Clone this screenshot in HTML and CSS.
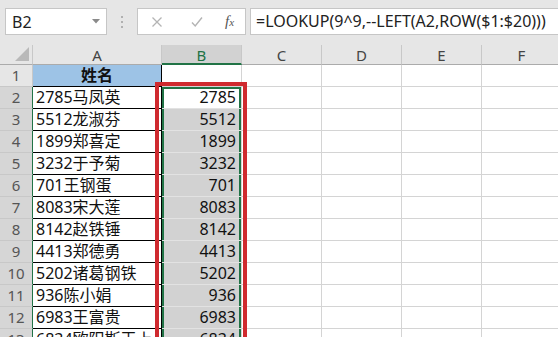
FILE: index.html
```html
<!DOCTYPE html>
<html lang="zh">
<head>
<meta charset="utf-8">
<link rel="stylesheet" href="styles.css">
</head>
<body>
<div class="app">
  <div class="fbar">
    <div class="namebox">
      <span class="nb-text">B2</span>
      <svg class="nb-arrow" width="8" height="5" viewBox="0 0 8 5"><path d="M0 0H8L4 4.5Z" fill="#8a8a8a"/></svg>
    </div>
    <div class="dots"><i></i><i></i><i></i></div>
    <div class="fxbox">
      <svg class="ico" width="12" height="12" viewBox="0 0 12 12"><path d="M1.5 1.5L10.5 10.5M10.5 1.5L1.5 10.5" stroke="#b4b4b4" stroke-width="1.3" fill="none"/></svg>
      <svg class="ico" width="12" height="12" viewBox="0 0 12 12"><path d="M1 6.5L4.2 10L11 1.5" stroke="#b4b4b4" stroke-width="1.4" fill="none"/></svg>
      <span class="fx">f<small>x</small></span>
    </div>
    <div class="formula">=LOOKUP(9^9,--LEFT(A2,ROW($1:$20)))</div>
  </div>

  <div class="sheet">
    <div class="corner"><svg width="14" height="14" viewBox="0 0 14 14"><path d="M14 0V14H0Z" fill="#b9b9b9"/></svg></div>
    <div class="ch">A</div>
    <div class="ch ch-sel">B</div>
    <div class="ch">C</div>
    <div class="ch">D</div>
    <div class="ch">E</div>
    <div class="ch">F</div>

    <div class="rh">1</div>
    <div class="c a a-head">姓名</div>
    <div class="c"></div><div class="c"></div><div class="c"></div><div class="c"></div><div class="c"></div>

    <div class="rh rh-sel">2</div>
    <div class="c a">2785马凤英</div>
    <div class="c b b-active b-top">2785</div>
    <div class="c"></div><div class="c"></div><div class="c"></div><div class="c"></div>

    <div class="rh rh-sel">3</div>
    <div class="c a">5512龙淑芬</div>
    <div class="c b">5512</div>
    <div class="c"></div><div class="c"></div><div class="c"></div><div class="c"></div>

    <div class="rh rh-sel">4</div>
    <div class="c a">1899郑喜定</div>
    <div class="c b">1899</div>
    <div class="c"></div><div class="c"></div><div class="c"></div><div class="c"></div>

    <div class="rh rh-sel">5</div>
    <div class="c a">3232于予菊</div>
    <div class="c b">3232</div>
    <div class="c"></div><div class="c"></div><div class="c"></div><div class="c"></div>

    <div class="rh rh-sel">6</div>
    <div class="c a">701王钢蛋</div>
    <div class="c b">701</div>
    <div class="c"></div><div class="c"></div><div class="c"></div><div class="c"></div>

    <div class="rh rh-sel">7</div>
    <div class="c a">8083宋大莲</div>
    <div class="c b">8083</div>
    <div class="c"></div><div class="c"></div><div class="c"></div><div class="c"></div>

    <div class="rh rh-sel">8</div>
    <div class="c a">8142赵铁锤</div>
    <div class="c b">8142</div>
    <div class="c"></div><div class="c"></div><div class="c"></div><div class="c"></div>

    <div class="rh rh-sel">9</div>
    <div class="c a">4413郑德勇</div>
    <div class="c b">4413</div>
    <div class="c"></div><div class="c"></div><div class="c"></div><div class="c"></div>

    <div class="rh rh-sel">10</div>
    <div class="c a">5202诸葛钢铁</div>
    <div class="c b">5202</div>
    <div class="c"></div><div class="c"></div><div class="c"></div><div class="c"></div>

    <div class="rh rh-sel">11</div>
    <div class="c a">936陈小娟</div>
    <div class="c b">936</div>
    <div class="c"></div><div class="c"></div><div class="c"></div><div class="c"></div>

    <div class="rh rh-sel">12</div>
    <div class="c a">6983王富贵</div>
    <div class="c b">6983</div>
    <div class="c"></div><div class="c"></div><div class="c"></div><div class="c"></div>

    <div class="rh rh-sel">13</div>
    <div class="c a">6834欧阳斯王上</div>
    <div class="c b">6834</div>
    <div class="c"></div><div class="c"></div><div class="c"></div><div class="c"></div>
  </div>

  <div class="mark"></div>
</div>
</body>
</html>
```
FILE: styles.css
```css
html, body {
  margin: 0;
  padding: 0;
}
body {
  width: 558px;
  height: 337px;
  overflow: hidden;
  background: #e6e6e6;
  font-family: "Noto Sans", "Noto Sans CJK SC", sans-serif;
}
.app {
  position: relative;
  width: 558px;
  height: 337px;
  overflow: hidden;
}

/* formula bar */
.fbar {
  height: 45px;
  box-sizing: border-box;
  padding-top: 8px;
  display: flex;
  align-items: flex-start;
  background: #e6e6e6;
}
.namebox {
  margin-left: 5px;
  width: 102px;
  height: 27px;
  box-sizing: border-box;
  background: #fff;
  border: 1px solid #c6c6c6;
  display: flex;
  align-items: center;
  justify-content: space-between;
  padding: 0 6px 0 6px;
}
.nb-text {
  font-size: 16px;
  color: #222;
  line-height: 20px;
}
.nb-arrow {
  display: block;
}
.dots {
  width: 30px;
  height: 27px;
  display: flex;
  flex-direction: column;
  align-items: center;
  justify-content: center;
  gap: 3px;
}
.dots i {
  display: block;
  width: 2px;
  height: 2px;
  background: #b0b0b0;
}
.fxbox {
  width: 109px;
  height: 27px;
  box-sizing: border-box;
  background: #fff;
  border: 1px solid #c6c6c6;
  display: flex;
  align-items: center;
  padding: 0 0 0 13px;
  gap: 28px;
}
.ico {
  display: block;
}
.fx {
  font-family: "Liberation Serif", serif;
  font-style: italic;
  font-size: 15px;
  color: #555;
  margin-left: -6px;
  line-height: 20px;
}
.fx small {
  font-size: 11px;
}
.formula {
  flex: 1;
  margin-left: 4px;
  margin-right: -10px;
  height: 27px;
  box-sizing: border-box;
  background: #fff;
  border: 1px solid #c6c6c6;
  font-size: 16px;
  line-height: 24px;
  color: #222;
  padding-left: 5px;
  white-space: nowrap;
}

/* sheet */
.sheet {
  display: grid;
  grid-template-columns: 33px 129px 80px 80px 80px 80px 80px;
  grid-template-rows: 20px repeat(13, 22px);
  background: #fff;
  width: 562px;
}
.corner {
  background: #e6e6e6;
  border-right: 1px solid #c8c8c8;
  border-bottom: 1px solid #ababab;
  box-sizing: border-box;
  display: flex;
  align-items: flex-end;
  justify-content: flex-end;
  padding: 0 3px 3px 0;
}
.corner svg { display: block; }
.ch {
  background: #e6e6e6;
  border-right: 1px solid #c8c8c8;
  border-bottom: 1px solid #ababab;
  box-sizing: border-box;
  text-align: center;
  font-size: 15px;
  line-height: 20px;
  color: #444;
}
.ch-sel {
  background: #d2d2d2;
  color: #217346;
  border-bottom: 2px solid #217346;
}
.rh {
  background: #e6e6e6;
  border-right: 1px solid #c8c8c8;
  border-bottom: 1px solid #c8c8c8;
  box-sizing: border-box;
  text-align: center;
  font-size: 15px;
  line-height: 21px;
  color: #555;
}
.rh-sel {
  background: #d6d6d6;
  border-right: 1px solid #217346;
}
.c {
  box-sizing: border-box;
  border-right: 1px solid #d4d4d4;
  border-bottom: 1px solid #d4d4d4;
  font-size: 16px;
  line-height: 21px;
  color: #111;
  padding: 0 3px;
  white-space: nowrap;
  overflow: hidden;
}
.a {
  border-right: 1px solid #000;
  border-bottom: 1px solid #000;
}
.a-head {
  background: #9dc3e6;
  font-weight: bold;
  text-align: center;
}
.b {
  background: #d2d2d2;
  text-align: right;
  padding-right: 5px;
  border-bottom-color: #e2e2e2;
  box-shadow: inset 2px 0 0 #217346, inset -2px 0 0 #217346;
}
.b-active {
  background: #fff;
}
.b-top {
  box-shadow: inset 2px 0 0 #217346, inset -2px 0 0 #217346, inset 0 2px 0 #217346;
}

/* annotation */
.mark {
  position: absolute;
  left: 155px;
  top: 82px;
  width: 92px;
  height: 300px;
  box-sizing: border-box;
  border: 4px solid #cf2a2f;
}
```
